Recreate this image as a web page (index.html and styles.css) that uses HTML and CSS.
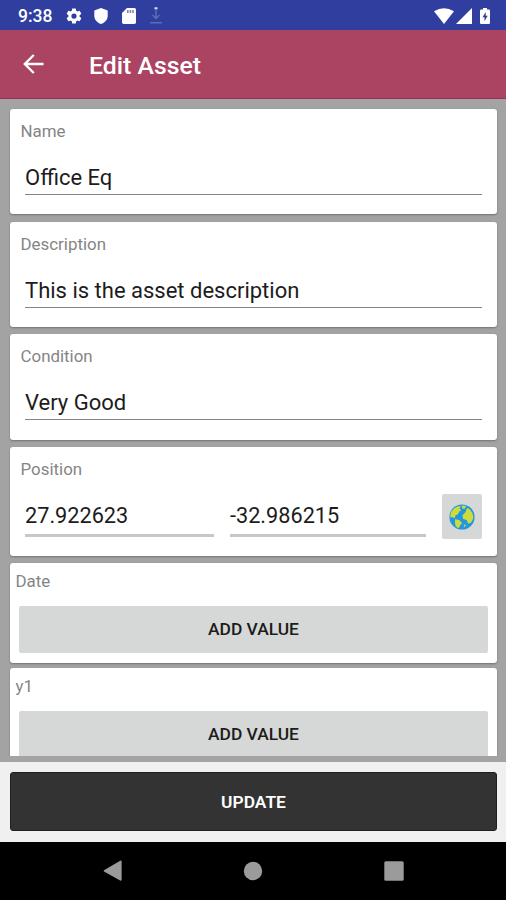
FILE: index.html
```html
<!DOCTYPE html>
<html lang="en">
<head>
<meta charset="utf-8">
<title>Edit Asset</title>
<link rel="stylesheet" href="styles.css">
</head>
<body>
<div class="screen">
  <div class="status">
    <span class="clock">9:38</span>
    <svg class="gear" width="18" height="18" viewBox="0 0 24 24" fill="#fff"><path d="M19.4 13a7.500 7.500 0 0 0 0-2l2.100-1.650a.5.5 0 0 0 .12-.64l-2-3.460a.5.5 0 0 0-.61-.22l-2.490 1a7.300 7.300 0 0 0-1.690-.98l-.38-2.650A.5.5 0 0 0 14 2h-4a.5.5 0 0 0-.49.42l-.38 2.650c-.61.25-1.170.59-1.690.98l-2.490-1a.5.5 0 0 0-.61.22l-2 3.460a.5.5 0 0 0 .12.64L4.570 11a7.900 7.900 0 0 0 0 2l-2.110 1.650a.5.5 0 0 0-.12.640l2 3.460c.12.22.39.3.61.22l2.490-1c.52.4 1.080.73 1.690.98l.38 2.650c.03.24.24.42.49.42h4c.25 0 .46-.18.49-.42l.38-2.650c.61-.25 1.170-.59 1.690-.98l2.490 1c.23.09.49 0 .61-.22l2-3.460a.5.5 0 0 0-.12-.64zM12 15.500a3.500 3.500 0 1 1 0-7 3.500 3.500 0 0 1 0 7z"/></svg>
    <svg class="shield" width="14" height="16" viewBox="0 0 14 16" fill="#fff"><path d="M7 0l6.700 2.600v5.200C13.700 11.500 11 14.800 7 16 3 14.800.3 11.500.3 7.800V2.600z"/></svg>
    <svg class="sd" width="14" height="16" viewBox="0 0 14 16"><path fill="#fff" d="M5 0h7.300Q14 0 14 1.700v12.600q0 1.700-1.700 1.700H1.700Q0 16 0 14.300V5z"/><path fill="#7b86c4" d="M5 2h1.600v3H5zM7.600 2h1.600v3H7.600zM10.200 2h1.600v3h-1.600z"/></svg>
    <svg class="download" width="12" height="17" viewBox="0 0 12 17" fill="none"><path stroke="#dde1f3" stroke-width="3" d="M6 .3v2"/><path stroke="#5f6bb7" stroke-width="1.500" d="M6 3v8M2.500 8L6 11.500 9.500 8M0 15.800h12"/></svg>
    <svg class="wifi" width="20" height="16" viewBox="0 0 20 16" fill="#fff"><path d="M0 3.200Q10-2.800 20 3.200L10 16z"/></svg>
    <svg class="signal" width="16" height="16" viewBox="0 0 16 16" fill="#fff"><path d="M16 0v16H0z"/></svg>
    <svg class="battery" width="10" height="16" viewBox="0 0 10 16"><path fill="#fff" d="M3 0h4v1.600h1.800Q10 1.600 10 2.800v12q0 1.200-1.200 1.200H1.200Q0 16 0 14.800v-12q0-1.200 1.200-1.200H3z"/><path fill="#303f9f" d="M5.700 4L2.500 9.200h2v4l3.200-5.500h-2z"/></svg>
  </div>
  <header class="appbar">
    <svg class="back" width="21" height="20" viewBox="0 0 21 20" fill="none" stroke="#fff" stroke-width="2.400"><path d="M20.500 10H2M10.800 1L1.800 10l9 9"/></svg>
    <h1>Edit Asset</h1>
  </header>
  <main class="list">
    <section class="card"><label>Name</label><div class="input">Office Eq</div></section>
    <section class="card"><label>Description</label><div class="input">This is the asset description</div></section>
    <section class="card"><label>Condition</label><div class="input">Very Good</div></section>
    <section class="card position">
      <label>Position</label>
      <div class="coords">
        <div class="input lat">27.922623</div>
        <div class="input lon">-32.986215</div>
        <div class="globe">
          <svg width="26" height="26" viewBox="0 0 26 26"><circle cx="13" cy="13" r="12.600" fill="#2196e3"/><g fill="#cddc39"><path d="M1.500 10Q3.500 4 9 2.200l3 .4-1.500 2 1.800 1.600-2.300 1.500-1 2.500-2.500 1-.7 3-2.600-1.200-2 .5z"/><path d="M13 1.500l4 .5-1.500 3-2.500-.8z"/><path d="M18 4l2.500.9q3.500 3.500 3.900 8-.3 3.500-2.700 6l-2.700.6-1.200-3.500-3.600-.9-.8-3.700 3.200-3.300z"/><path d="M6 15.300l4.200.8 2.900 2.800-1.800 2.300-1.600 3-2.900-1.600-.8-3.300z"/><path d="M15 20.500l2.300.8-2.600 2.200z"/></g></svg>
        </div>
      </div>
    </section>
    <section class="card value"><label>Date</label><div class="add">ADD VALUE</div></section>
    <section class="card value last"><label>y1</label><div class="add">ADD VALUE</div></section>
  </main>
  <footer class="footer"><div class="update">UPDATE</div></footer>
  <nav class="nav">
    <svg width="20" height="22" viewBox="0 0 20 22" fill="#9b9b9b"><path d="M1 10.300L17.600.5q1 0 1 1v18.300q0 1-1 1L1 11.500q-.8-.6 0-1.200z"/></svg>
    <svg width="20" height="20" viewBox="0 0 20 20" fill="#9b9b9b"><circle cx="10" cy="10" r="9.200"/></svg>
    <svg width="20" height="20" viewBox="0 0 20 20" fill="#9b9b9b"><rect x=".3" y=".3" width="19.400" height="19.400" rx="1.500"/></svg>
  </nav>
</div>
</body>
</html>
```

FILE: styles.css
```css
* { box-sizing: border-box; }
body { margin: 0; font-family: Roboto, sans-serif; }
.screen {
  width: 506px;
  height: 900px;
  display: flex;
  flex-direction: column;
  overflow: hidden;
  background: #a3a3a3;
}
.status {
  height: 30px;
  flex: none;
  display: flex;
  align-items: center;
  padding: 1px 16.5px 0 18px;
  background: #303f9f;
}
.clock { width: 47px; color: #fff; font-size: 17.5px; font-weight: 500; line-height: 28px; }
.shield { margin-left: 11px; }
.sd { margin-left: 14px; }
.download { margin-left: 14px; }
.wifi { margin-left: auto; }
.signal { margin-left: 2px; }
.battery { margin-left: 8px; }
.appbar {
  height: 69px;
  flex: none;
  display: flex;
  align-items: center;
  padding: 0 23px;
  background: #ab4363;
  border-bottom: 1px solid #95324f;
}
.appbar h1 {
  margin: 3px 0 0 45px;
  color: #fff;
  font-size: 24.8px;
  font-weight: 500;
  line-height: 32px;
}
.list {
  height: 657px;
  flex: none;
  overflow: hidden;
  display: flex;
  flex-direction: column;
  gap: 7.4px;
  padding: 10px 9px 0 10px;
}
.card {
  flex: none;
  height: 105.3px;
  padding: 12px 15px 0 10.5px;
  border-radius: 3px;
  background: #fff;
  box-shadow: 0 1px 2px rgba(0, 0, 0, .3);
}
.card label {
  display: block;
  color: #858585;
  font-size: 16.9px;
  line-height: 20px;
}
.input {
  height: 42px;
  margin: 12px 0 0 4.5px;
  padding-top: 11px;
  border-bottom: 1px solid #858585;
  color: #1c1c1c;
  font-size: 22px;
  line-height: 28px;
}
.position { height: 109.4px; }
.coords { display: flex; align-items: flex-start; }
.coords .input { height: 46px; border-bottom: 3px solid #c8c8c8; font-size: 21.7px; }
.lat { width: 189px; }
.coords .lon { width: 196px; margin-left: 16px; }
.globe {
  width: 40px;
  height: 45px;
  margin: 15px 0 0 16px;
  display: flex;
  align-items: center;
  justify-content: center;
  border-radius: 2px;
  background: #d6d7d7;
}
.value { height: 99.6px; padding: 8px 9px 0; margin-top: -.6px; }
.value label { margin-left: -3.5px; }
.value.last { height: 110px; margin-top: -2.4px; }
.add {
  height: 47px;
  margin-top: 15px;
  border-radius: 2px;
  background: #d6d8d7;
  color: #1c1c1c;
  font-size: 17.4px;
  font-weight: 500;
  line-height: 47px;
  text-align: center;
}
.footer {
  height: 80px;
  flex: none;
  margin-top: 6px;
  padding: 10px 9px 0 10px;
  background: #f0f0f0;
}
.update {
  height: 59px;
  border: 1px solid #1f1f1f;
  border-radius: 3px;
  background: #333;
  color: #fff;
  font-size: 17.4px;
  font-weight: 600;
  line-height: 59px;
  text-align: center;
}
.nav {
  height: 58px;
  flex: none;
  display: flex;
  justify-content: space-between;
  align-items: center;
  padding: 0 102.5px;
  background: #000;
}
```
